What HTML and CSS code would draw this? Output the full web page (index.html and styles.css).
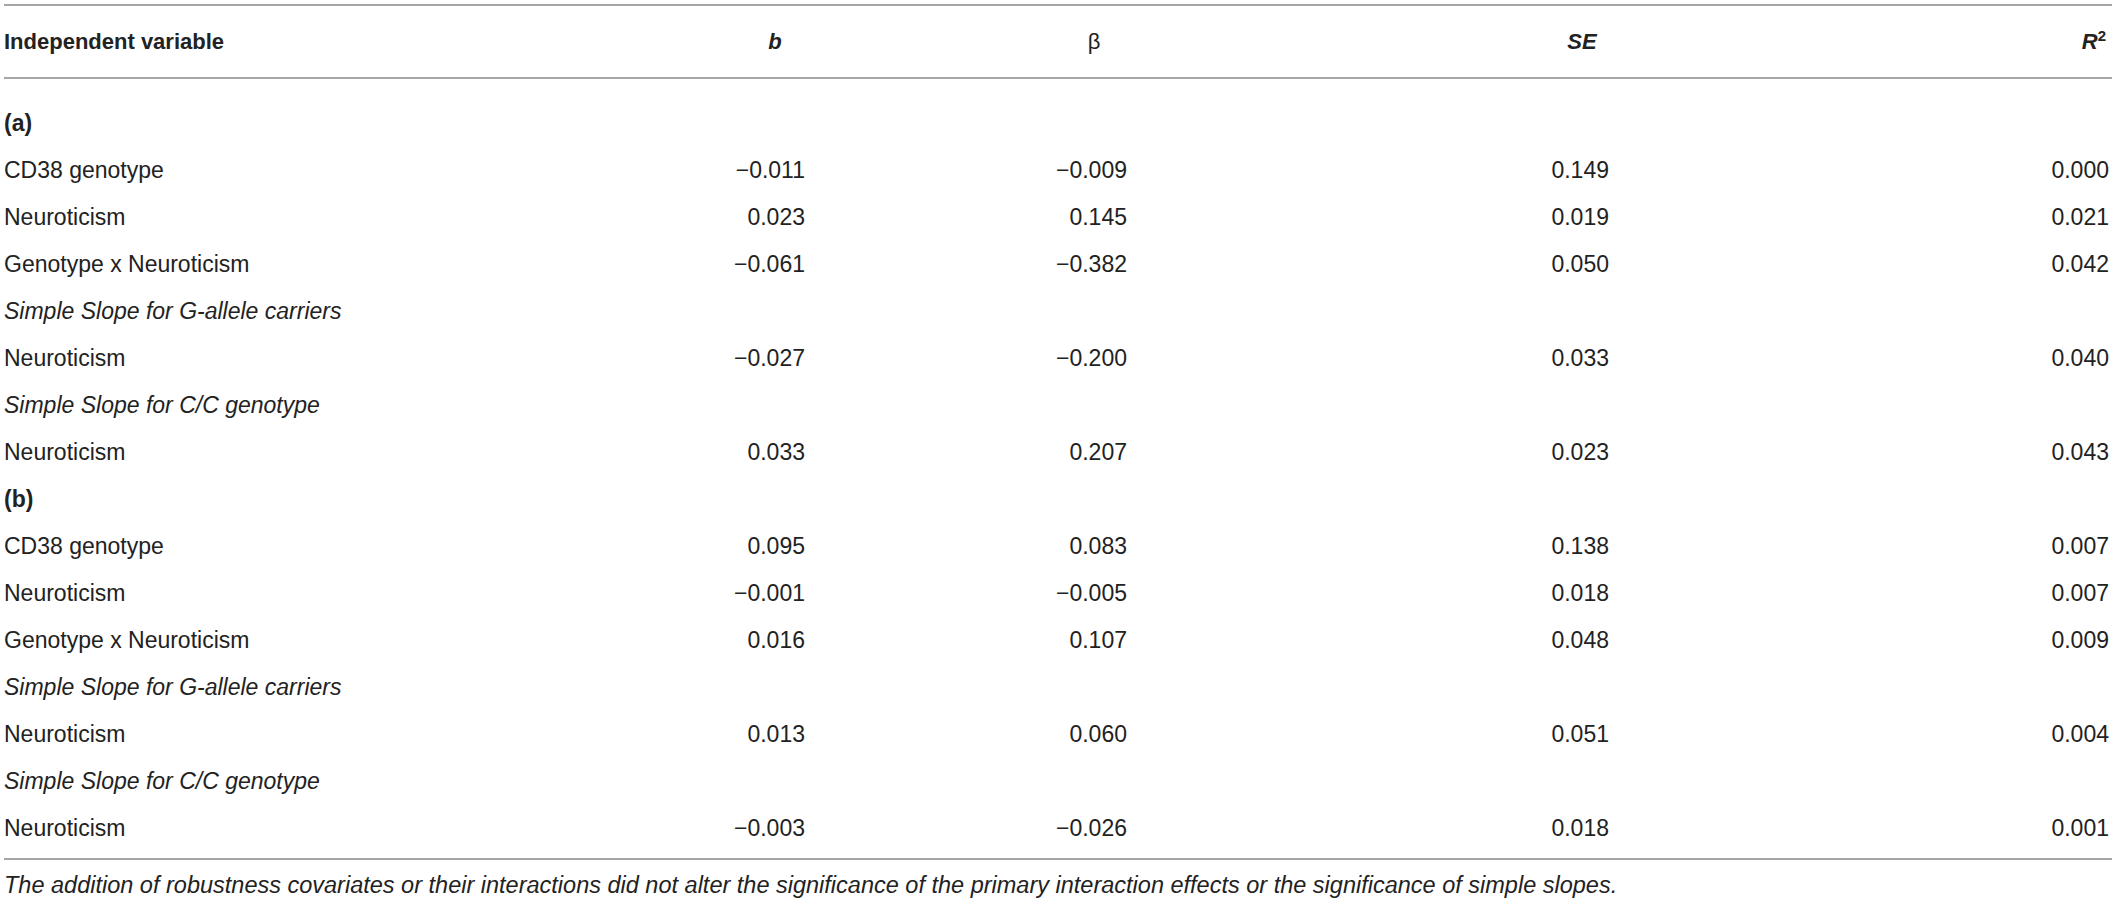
FILE: index.html
```html
<!DOCTYPE html>
<html lang="en">
<head>
    <meta charset="UTF-8">
    <title>Regression table</title>
    <link rel="stylesheet" href="styles.css">
</head>
<body>

<div class="wrap">
    <table class="results">
        <colgroup>
            <col class="c-var">
            <col class="c-b">
            <col class="c-beta">
            <col class="c-se">
            <col class="c-r2">
        </colgroup>
        <thead>
            <tr>
                <th class="label">Independent variable</th>
                <th><em>b</em></th>
                <th class="beta">&beta;</th>
                <th><em>SE</em></th>
                <th class="last"><em>R</em><sup>2</sup></th>
            </tr>
        </thead>
        <tbody>
            <tr class="group"><td colspan="5"><strong>(a)</strong></td></tr>
            <tr><td>CD38 genotype</td><td class="n b">&minus;0.011</td><td class="n beta">&minus;0.009</td><td class="n se">0.149</td><td class="n r2">0.000</td></tr>
            <tr><td>Neuroticism</td><td class="n b">0.023</td><td class="n beta">0.145</td><td class="n se">0.019</td><td class="n r2">0.021</td></tr>
            <tr><td>Genotype x Neuroticism</td><td class="n b">&minus;0.061</td><td class="n beta">&minus;0.382</td><td class="n se">0.050</td><td class="n r2">0.042</td></tr>
            <tr><td colspan="5"><em>Simple Slope for G-allele carriers</em></td></tr>
            <tr><td>Neuroticism</td><td class="n b">&minus;0.027</td><td class="n beta">&minus;0.200</td><td class="n se">0.033</td><td class="n r2">0.040</td></tr>
            <tr><td colspan="5"><em>Simple Slope for C/C genotype</em></td></tr>
            <tr><td>Neuroticism</td><td class="n b">0.033</td><td class="n beta">0.207</td><td class="n se">0.023</td><td class="n r2">0.043</td></tr>
            <tr><td colspan="5"><strong>(b)</strong></td></tr>
            <tr><td>CD38 genotype</td><td class="n b">0.095</td><td class="n beta">0.083</td><td class="n se">0.138</td><td class="n r2">0.007</td></tr>
            <tr><td>Neuroticism</td><td class="n b">&minus;0.001</td><td class="n beta">&minus;0.005</td><td class="n se">0.018</td><td class="n r2">0.007</td></tr>
            <tr><td>Genotype x Neuroticism</td><td class="n b">0.016</td><td class="n beta">0.107</td><td class="n se">0.048</td><td class="n r2">0.009</td></tr>
            <tr><td colspan="5"><em>Simple Slope for G-allele carriers</em></td></tr>
            <tr><td>Neuroticism</td><td class="n b">0.013</td><td class="n beta">0.060</td><td class="n se">0.051</td><td class="n r2">0.004</td></tr>
            <tr><td colspan="5"><em>Simple Slope for C/C genotype</em></td></tr>
            <tr class="end"><td>Neuroticism</td><td class="n b">&minus;0.003</td><td class="n beta">&minus;0.026</td><td class="n se">0.018</td><td class="n r2">0.001</td></tr>
        </tbody>
    </table>

    <p class="note">The addition of robustness covariates or their interactions did not alter the significance of the primary interaction effects or the significance of simple slopes.</p>
</div>

</body>
</html>
```

FILE: styles.css
```css
body {
    margin: 0;
    padding: 0;
    background: #fff;
    font-family: "Liberation Sans", Arial, sans-serif;
    color: #222;
}
.wrap {
    width: 2108px;
    margin: 4px 0 0 4px;
}
.results {
    width: 2108px;
    table-layout: fixed;
    border-collapse: collapse;
    font-size: 23px;
}
.c-var { width: 596px; }
.c-b { width: 350px; }
.c-beta { width: 288px; }
.c-se { width: 688px; }
.c-r2 { width: 186px; }

.results thead tr {
    border-top: 2px solid #a6a6a6;
    border-bottom: 2px solid #a6a6a6;
}
.results th {
    height: 71px;
    padding: 0;
    font-size: 22px;
    font-weight: bold;
    text-align: center;
    vertical-align: middle;
}
.results th.label {
    text-align: left;
}
.results th.beta {
    font-weight: normal;
}
.results th.last {
    text-align: right;
    padding-right: 6px;
}
.results th sup {
    font-size: 15px;
    line-height: 0;
}
.results td {
    height: 47px;
    padding: 0;
    line-height: 47px;
    white-space: nowrap;
    vertical-align: middle;
}
.results tbody tr:first-child td {
    padding-top: 21px;
}
.results tbody tr.end td {
    padding-bottom: 6px;
}
.results tbody tr.end {
    border-bottom: 2px solid #a6a6a6;
}
.results td.n {
    text-align: right;
}
.results td.b { padding-right: 145px; }
.results td.beta { padding-right: 111px; }
.results td.se { padding-right: 317px; }
.results td.r2 { padding-right: 3px; }

.note {
    margin: 0;
    padding-top: 10px;
    font-size: 23.5px;
    font-style: italic;
    line-height: 30px;
}
```
